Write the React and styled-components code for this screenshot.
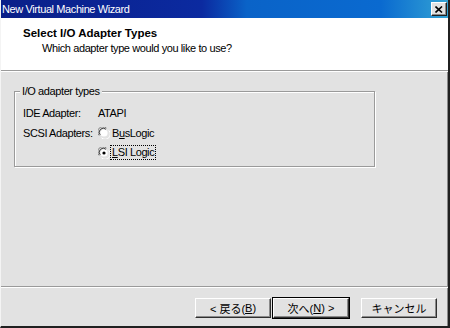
import React from "react"
import styled, { createGlobalStyle } from "styled-components"

const GlobalStyle = createGlobalStyle`
  html, body {
    margin: 0;
    padding: 0;
    background: #e2e2e2;
  }
  body {
    font-family: "Liberation Sans", "Noto Sans CJK JP", sans-serif;
    font-size: 11px;
    letter-spacing: -0.4px;
    color: #000;
  }
`

const Window = styled.div`
  width: 450px;
  height: 328px;
  box-sizing: border-box;
  display: flex;
  flex-direction: column;
  background: #e2e2e2;
  border-left: 1px solid #f4f4f4;
  border-right: 2px solid #202020;
  border-bottom: 2px solid #202020;
  box-shadow: inset -1px 0 0 #8a8a8a;
`

const TitleBar = styled.div`
  height: 18px;
  flex: none;
  display: flex;
  align-items: center;
  justify-content: space-between;
  padding: 0 1px 0 1px;
  background: linear-gradient(90deg, #0a1f88 0%, #0b2aa0 45%, #0a63c8 55%, #0a6ad0 85%, #32a2d4 100%);
  color: #fff;
`

const CloseButton = styled.div`
  width: 16px;
  height: 14px;
  box-sizing: border-box;
  display: flex;
  align-items: center;
  justify-content: center;
  background: #e2e2e2;
  border: 1px solid;
  border-color: #fff #202020 #202020 #fff;
  box-shadow: inset -1px -1px 0 #8a8a8a;
`

const Header = styled.div`
  height: 52px;
  flex: none;
  background: #fff;
  padding: 9px 0 0 22px;
  box-sizing: border-box;
`

const HeaderTitle = styled.div`
  font-weight: bold;
  font-size: 11.5px;
  line-height: 13px;
  letter-spacing: 0px;
`

const HeaderSub = styled.div`
  margin: 2px 0 0 19px;
  line-height: 13px;
`

const Etched = styled.div`
  flex: none;
  height: 2px;
  border-top: 1px solid #9a9a9a;
  border-bottom: 1px solid #fff;
  box-sizing: border-box;
`

const Body = styled.div`
  flex: 1;
  padding: 19px 0 0 13px;
`

const GroupBox = styled.fieldset`
  width: 361px;
  height: 76px;
  box-sizing: border-box;
  margin: 0;
  padding: 11px 0 0 8px;
  border: 1px solid #9a9a9a;
  box-shadow: 1px 1px 0 #fff, inset 1px 1px 0 #fff;
  position: relative;
`

const Legend = styled.div`
  position: absolute;
  top: -7px;
  left: 5px;
  padding: 0 2px;
  background: #e2e2e2;
  line-height: 13px;
`

const Row = styled.div`
  display: flex;
  align-items: center;
  height: ${p => p.$h || 20}px;
`

const Label = styled.div`
  width: 75px;
  flex: none;
`

const RadioItem = styled.div`
  display: flex;
  align-items: center;
  gap: 1px;
`

const RadioText = styled.span`
  padding: 0 1px;
  line-height: 13px;
  outline: ${p => (p.$focus ? "1px dotted #000" : "none")};
`

const Footer = styled.div`
  height: 38px;
  flex: none;
  display: flex;
  align-items: flex-start;
  padding: 10px 0 0 194px;
  box-sizing: border-box;
`

const Button = styled.div`
  width: 76px;
  height: 20px;
  box-sizing: border-box;
  display: flex;
  align-items: center;
  justify-content: center;
  font-size: 11px;
  letter-spacing: 0;
  background: #e2e2e2;
  border: 1px solid;
  border-color: #fff #303030 #303030 #fff;
  box-shadow: inset -1px -1px 0 #8a8a8a;
  margin-left: ${p => p.$gap || 0}px;
  ${p =>
    p.$default &&
    `
    outline: 1px solid #000;
  `}
`

const U = styled.span`
  text-decoration: underline;
`

const Radio = ({ checked }) => (
  <svg width="12" height="12" viewBox="0 0 12 12">
    <path d="M8.5 1.2 A5 5 0 0 0 1.2 8.5" fill="none" stroke="#808080" strokeWidth="1" />
    <path d="M8 2.4 A3.8 3.8 0 0 0 2.4 8" fill="none" stroke="#303030" strokeWidth="1" />
    <path d="M3.5 10.8 A5 5 0 0 0 10.8 3.5" fill="none" stroke="#fff" strokeWidth="1" />
    <circle cx="6" cy="6" r="3.6" fill="#fff" />
    {checked && <circle cx="6" cy="6" r="1.6" fill="#000" />}
  </svg>
)

const CloseIcon = () => (
  <svg width="8" height="7" viewBox="0 0 8 7">
    <path d="M0.5 0.5 L7 6.5 M7 0.5 L0.5 6.5" stroke="#000" strokeWidth="1.6" />
  </svg>
)

export default function App() {
  return (
    <>
      <GlobalStyle />
      <Window>
        <TitleBar>
          <span>New Virtual Machine Wizard</span>
          <CloseButton>
            <CloseIcon />
          </CloseButton>
        </TitleBar>
        <Header>
          <HeaderTitle>Select I/O Adapter Types</HeaderTitle>
          <HeaderSub>Which adapter type would you like to use?</HeaderSub>
        </Header>
        <Etched />
        <Body>
          <GroupBox>
            <Legend>I/O adapter types</Legend>
            <Row $h={20}>
              <Label>IDE Adapter:</Label>
              <span>ATAPI</span>
            </Row>
            <Row $h={20}>
              <Label>SCSI Adapters:</Label>
              <RadioItem>
                <Radio />
                <RadioText>
                  B<U>u</U>sLogic
                </RadioText>
              </RadioItem>
            </Row>
            <Row $h={19}>
              <Label />
              <RadioItem>
                <Radio checked />
                <RadioText $focus>
                  <U>L</U>SI Logic
                </RadioText>
              </RadioItem>
            </Row>
          </GroupBox>
        </Body>
        <Etched />
        <Footer>
          <Button>
            &lt; 戻る(<U>B</U>)
          </Button>
          <Button $default $gap={2}>
            次へ(<U>N</U>) &gt;
          </Button>
          <Button $gap={12}>キャンセル</Button>
        </Footer>
      </Window>
    </>
  )
}
